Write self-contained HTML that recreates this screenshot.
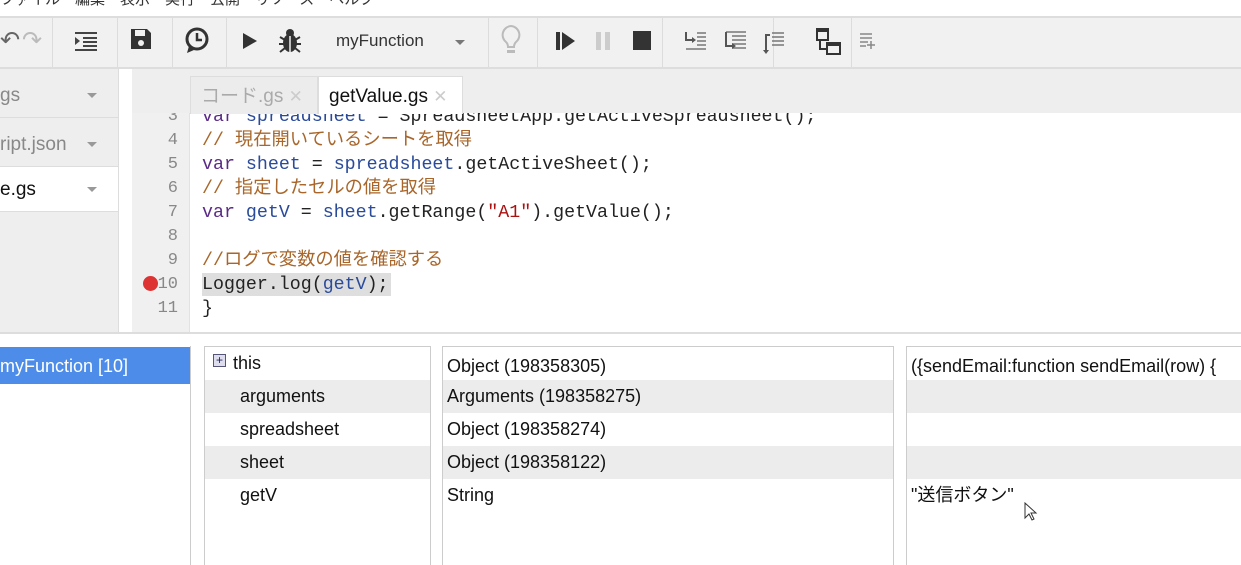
<!DOCTYPE html>
<html><head><meta charset="utf-8"><style>
*{margin:0;padding:0;box-sizing:border-box}
body{width:1241px;height:565px;overflow:hidden;background:#fff;font-family:"Liberation Sans","Noto Sans CJK JP",sans-serif;position:relative}
.a{position:absolute}
.tb{left:0;top:16px;width:1241px;height:53px;background:#f1f1f1;border-top:2px solid #ddd;border-bottom:2px solid #ddd}
.sep{position:absolute;top:0;width:1px;height:49px;background:#dcdcdc}
.code{font-family:"Liberation Mono","Noto Sans CJK JP",monospace;font-size:18.3px;line-height:24px;white-space:pre}
.ln{position:absolute;left:132px;width:46px;text-align:right;color:#888;font-family:"Liberation Mono",monospace;font-size:17px;line-height:24px}
.k{color:#5b2a86}.v{color:#2a4a9a}.c{color:#a8662a}.s{color:#a11}
.row{position:absolute;height:33px;font-size:18px;line-height:33px;color:#111}
.g{background:#ececec}
</style></head><body>
<div class="a" style="left:0;top:-12px;font-size:15px;color:#333;white-space:nowrap">ファイル　編集　表示　実行　公開　リソース　ヘルプ</div>
<div class="a tb">
 <div class="sep" style="left:52px"></div><div class="sep" style="left:117px"></div><div class="sep" style="left:172px"></div><div class="sep" style="left:226px"></div><div class="sep" style="left:488px"></div><div class="sep" style="left:537px"></div><div class="sep" style="left:662px"></div><div class="sep" style="left:773px"></div><div class="sep" style="left:851px"></div>
 <div class="a" style="left:0;top:8px;font-size:24px;color:#666">↶</div>
 <div class="a" style="left:22px;top:8px;font-size:24px;color:#bbb">↷</div>
 <svg class="a" style="left:75px;top:12px" width="24" height="22"><rect x="0" y="2" width="22" height="2" fill="#444"/><rect x="8" y="7" width="14" height="2" fill="#444"/><rect x="8" y="11" width="14" height="2" fill="#444"/><rect x="8" y="15" width="14" height="2" fill="#444"/><rect x="0" y="19" width="22" height="2" fill="#444"/><path d="M0 7l5 4-5 4z" fill="#444"/></svg>
 <svg class="a" style="left:130px;top:10px" width="22" height="22"><path d="M1 1h16l4 4v16H1z" fill="#333"/><rect x="5" y="2" width="10" height="6" fill="#f1f1f1"/><circle cx="11" cy="15" r="3" fill="#f1f1f1"/></svg>
 <svg class="a" style="left:184px;top:8px" width="28" height="30"><circle cx="13" cy="13" r="10" fill="none" stroke="#333" stroke-width="3"/><path d="M13 7v7h5" stroke="#333" stroke-width="2.5" fill="none"/><path d="M5 20l-2 7 7-3z" fill="#333"/></svg>
 <svg class="a" style="left:242px;top:14px" width="16" height="18"><path d="M1 1l14 8-14 8z" fill="#333"/></svg>
 <svg class="a" style="left:278px;top:10px" width="24" height="26"><ellipse cx="12" cy="15" rx="7" ry="9" fill="#333"/><circle cx="12" cy="5" r="4" fill="#333"/><path d="M2 9l5 3M22 9l-5 3M1 16h6M23 16h-6M2 24l5-4M22 24l-5-4" stroke="#333" stroke-width="2"/><path d="M12 8v16" stroke="#f1f1f1" stroke-width="1.5"/></svg>
 <div class="a" style="left:336px;top:13px;font-size:17px;color:#333">myFunction</div>
 <div class="a" style="left:455px;top:22px;width:0;height:0;border-left:5px solid transparent;border-right:5px solid transparent;border-top:5px solid #777"></div>
 <svg class="a" style="left:499px;top:6px" width="24" height="36"><path d="M12 2a9 9 0 0 0-5 16c1 1 2 3 2 5h6c0-2 1-4 2-5a9 9 0 0 0-5-16z" fill="none" stroke="#bbb" stroke-width="2"/><rect x="8" y="26" width="8" height="3" fill="#bbb"/></svg>
 <svg class="a" style="left:556px;top:13px" width="20" height="20"><rect x="0" y="1" width="4" height="18" fill="#333"/><path d="M6 1l13 9-13 9z" fill="#333"/></svg>
 <svg class="a" style="left:595px;top:13px" width="16" height="20"><rect x="1" y="1" width="5" height="18" fill="#ccc"/><rect x="10" y="1" width="5" height="18" fill="#ccc"/></svg>
 <div class="a" style="left:633px;top:13px;width:18px;height:19px;background:#333"></div>
 <svg class="a" style="left:684px;top:12px" width="24" height="22"><path d="M2 2v8h8" stroke="#555" stroke-width="2" fill="none"/><path d="M8 7l4 3-4 3z" fill="#555"/><path d="M13 3h9M13 7h9M13 11h9M13 15h9M2 19h20" stroke="#777" stroke-width="1.5"/></svg>
 <svg class="a" style="left:724px;top:12px" width="24" height="24"><path d="M2 2h20M8 6h14M8 10h14M8 14h14M8 18h14" stroke="#777" stroke-width="1.5"/><path d="M2 2v14h6" stroke="#555" stroke-width="2" fill="none"/><path d="M8 13l4 3-4 3z" fill="#555"/></svg>
 <svg class="a" style="left:762px;top:12px" width="24" height="26"><path d="M10 3h12M10 7h12M10 11h12M10 15h12" stroke="#777" stroke-width="1.5"/><path d="M8 5H4v16" stroke="#555" stroke-width="2" fill="none"/><path d="M1 20h6l-3 4z" fill="#555"/></svg>
 <svg class="a" style="left:816px;top:10px" width="26" height="28"><rect x="1" y="1" width="11" height="11" fill="none" stroke="#333" stroke-width="2"/><rect x="1" y="1" width="11" height="3" fill="#333"/><path d="M4 12v9h6" stroke="#333" stroke-width="2" fill="none"/><rect x="11" y="15" width="13" height="11" fill="none" stroke="#333" stroke-width="2"/><rect x="11" y="15" width="13" height="3" fill="#333"/></svg>
 <svg class="a" style="left:859px;top:14px" width="18" height="18"><path d="M1 2h12M1 6h12M1 10h8M1 14h6M12 9v8M8 13h8" stroke="#888" stroke-width="1.5"/></svg>
</div>
<!-- sidebar -->
<div class="a" style="left:0;top:69px;width:119px;height:264px;background:#eeeeee;border-right:1px solid #ddd"></div>
<div class="a" style="left:0;top:73px;width:118px;height:45px;font-size:19px;line-height:45px;color:#888;border-bottom:1px solid #ddd">gs</div>
<div class="a" style="left:0;top:122px;width:118px;height:45px;font-size:19px;line-height:45px;color:#888;border-bottom:1px solid #ddd">ript.json</div>
<div class="a" style="left:0;top:167px;width:118px;height:45px;font-size:19px;line-height:45px;color:#111;background:#fff;border-bottom:1px solid #ddd">e.gs</div>
<div class="a" style="left:87px;top:93px;border-left:5px solid transparent;border-right:5px solid transparent;border-top:5px solid #999"></div>
<div class="a" style="left:87px;top:142px;border-left:5px solid transparent;border-right:5px solid transparent;border-top:5px solid #999"></div>
<div class="a" style="left:87px;top:187px;border-left:5px solid transparent;border-right:5px solid transparent;border-top:5px solid #999"></div>
<!-- gutter -->
<div class="a" style="left:132px;top:69px;width:58px;height:264px;background:#f0f0f0;border-right:1px solid #e2e2e2"></div>
<div class="ln" style="top:105px">3</div><div class="ln" style="top:129px">4</div><div class="ln" style="top:153px">5</div><div class="ln" style="top:177px">6</div><div class="ln" style="top:201px">7</div><div class="ln" style="top:225px">8</div><div class="ln" style="top:249px">9</div><div class="ln" style="top:273px">10</div><div class="ln" style="top:297px">11</div>
<div class="a" style="left:143px;top:276px;width:15px;height:15px;border-radius:50%;background:#d33"></div>
<div class="a" style="left:202px;top:273px;width:189px;height:23px;background:#dedede"></div>
<div class="a code" style="left:202px;top:105px;color:#222"><span class="k">var</span> <span class="v">spreadsheet</span> = SpreadsheetApp.getActiveSpreadsheet();
<span class="c">// 現在開いているシートを取得</span>
<span class="k">var</span> <span class="v">sheet</span> = <span class="v">spreadsheet</span>.getActiveSheet();
<span class="c">// 指定したセルの値を取得</span>
<span class="k">var</span> <span class="v">getV</span> = <span class="v">sheet</span>.getRange(<span class="s">"A1"</span>).getValue();

<span class="c">//ログで変数の値を確認する</span>
Logger.log(<span class="v">getV</span>);
}</div>
<!-- tab bar -->
<div class="a" style="left:132px;top:69px;width:1109px;height:44px;background:#eeeeee"></div>
<div class="a" style="left:190px;top:76px;width:128px;height:38px;background:#ececec;border:1px solid #ddd;border-bottom:none;font-size:19px;line-height:40px;color:#aaa;padding-left:10px">コード.gs <span style="color:#ccc;font-size:17px">✕</span></div>
<div class="a" style="left:318px;top:76px;width:145px;height:38px;background:#fff;border:1px solid #ddd;border-bottom:none;font-size:19px;line-height:40px;color:#111;padding-left:10px">getValue.gs <span style="color:#ccc;font-size:17px">✕</span></div>
<div class="a" style="left:0;top:332px;width:1241px;height:2px;background:#ddd"></div>
<!-- bottom -->
<div class="a" style="left:190px;top:346px;width:1px;height:219px;background:#ccc"></div>
<div class="a" style="left:0;top:347px;width:190px;height:37px;background:#4d8ce8;color:#fff;font-size:18px;line-height:39px">myFunction [10]</div>
<div class="a" style="left:204px;top:346px;width:227px;height:219px;border:1px solid #ccc;border-bottom:none"></div>
<div class="a" style="left:442px;top:346px;width:452px;height:219px;border:1px solid #ccc;border-bottom:none"></div>
<div class="a" style="left:906px;top:346px;width:340px;height:219px;border:1px solid #ccc;border-bottom:none"></div>
<div class="row g" style="left:205px;top:380px;width:225px"></div><div class="row g" style="left:205px;top:446px;width:225px"></div>
<div class="row g" style="left:443px;top:380px;width:450px"></div><div class="row g" style="left:443px;top:446px;width:450px"></div>
<div class="row g" style="left:907px;top:380px;width:334px"></div><div class="row g" style="left:907px;top:446px;width:334px"></div>
<div class="a" style="left:213px;top:354px;width:13px;height:13px;border:1px solid #557;background:#dde;font-size:12px;line-height:10px;text-align:center;color:#225">+</div>
<div class="row" style="left:233px;top:347px">this</div>
<div class="row" style="left:240px;top:380px">arguments</div>
<div class="row" style="left:240px;top:413px">spreadsheet</div>
<div class="row" style="left:240px;top:446px">sheet</div>
<div class="row" style="left:240px;top:479px">getV</div>
<div class="row" style="left:447px;top:350px">Object (198358305)</div>
<div class="row" style="left:447px;top:380px">Arguments (198358275)</div>
<div class="row" style="left:447px;top:413px">Object (198358274)</div>
<div class="row" style="left:447px;top:446px">Object (198358122)</div>
<div class="row" style="left:447px;top:479px">String</div>
<div class="row" style="left:911px;top:350px;white-space:nowrap">({sendEmail:function sendEmail(row) {</div>
<div class="row" style="left:911px;top:479px">"送信ボタン"</div>
<svg class="a" style="left:1024px;top:502px" width="14" height="20"><path d="M1 1v15l4-4 3 6 2-1-3-6h5z" fill="#fff" stroke="#333" stroke-width="1"/></svg>
</body></html>
